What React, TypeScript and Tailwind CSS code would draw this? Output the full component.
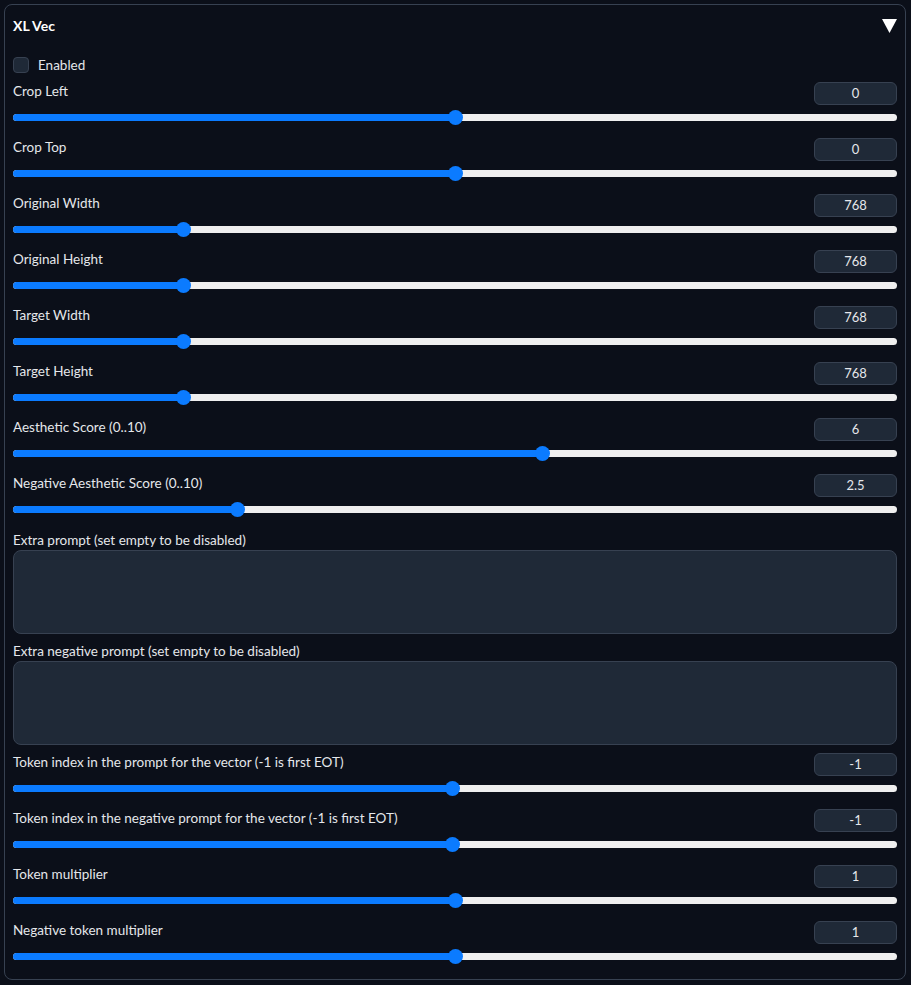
import React from 'react'

type SliderRow = { label: string; value: string; pos: number }

const topSliders: SliderRow[] = [
  { label: 'Crop Left', value: '0', pos: 0.5 },
  { label: 'Crop Top', value: '0', pos: 0.5 },
  { label: 'Original Width', value: '768', pos: 0.1875 },
  { label: 'Original Height', value: '768', pos: 0.1875 },
  { label: 'Target Width', value: '768', pos: 0.1875 },
  { label: 'Target Height', value: '768', pos: 0.1875 },
  { label: 'Aesthetic Score (0..10)', value: '6', pos: 0.6 },
  { label: 'Negative Aesthetic Score (0..10)', value: '2.5', pos: 0.25 },
]

const bottomSliders: SliderRow[] = [
  { label: 'Token index in the prompt for the vector (-1 is first EOT)', value: '-1', pos: 0.497 },
  { label: 'Token index in the negative prompt for the vector (-1 is first EOT)', value: '-1', pos: 0.497 },
  { label: 'Token multiplier', value: '1', pos: 0.5 },
  { label: 'Negative token multiplier', value: '1', pos: 0.5 },
]

function Slider({ label, value, pos }: SliderRow) {
  // thumb travels from 7px to width-7px, like a native range
  const center = `calc(7px + (100% - 14px) * ${pos})`
  return (
    <div className="pb-[13px]">
      <div className="flex items-start justify-between h-[23px]">
        <span className="text-[13.5px] leading-[18px] text-[#e5e7eb]">{label}</span>
        <div className="w-[83px] h-[23px] rounded-[6px] bg-[#1f2937] border border-[#374151] flex items-center justify-center text-[13px] text-[#e5e7eb]">
          {value}
        </div>
      </div>
      <div className="relative h-[16px] mt-[4px] flex items-center">
        <div className="w-full h-[7px] rounded-full bg-[#efefef] overflow-hidden flex">
          <div className="h-full bg-[#0b7bff]" style={{ width: center }} />
        </div>
        <div
          className="absolute top-[0.5px] w-[15px] h-[15px] -ml-[7.5px] rounded-full bg-[#0b7bff]"
          style={{ left: center }}
        />
      </div>
    </div>
  )
}

export default function App() {
  return (
    <div
      className="min-h-[985px] bg-[#0b0f19] pt-[4px] pl-[4px] pr-[5px] pb-[4px]"
      style={{ fontFamily: 'Lato, "Noto Sans", sans-serif' }}
    >
      <div className="border border-[#374151] rounded-[8px] pl-[8px] pr-[8px] pt-[8px] pb-[2px]">
        <div className="flex items-center justify-between h-[25px]">
          <span className="text-[14px] font-bold text-white">XL Vec</span>
          <svg width="15" height="14" viewBox="0 0 15 14">
            <polygon points="0,0 15,0 7.5,14" fill="#ffffff" />
          </svg>
        </div>
        <label className="flex items-center gap-[9px] mt-[19px] h-[16px]">
          <span className="w-[16px] h-[16px] rounded-[4px] bg-[#1f2937] border border-[#374151]" />
          <span className="text-[13.5px] leading-[16px] text-[#e5e7eb]">Enabled</span>
        </label>
        <div className="mt-[9px]">
          {topSliders.map((s) => (
            <Slider key={s.label} {...s} />
          ))}
        </div>
        <div className="flex flex-col">
          <span className="text-[13.5px] text-[#e5e7eb] h-[20px] leading-[20px]">
            Extra prompt (set empty to be disabled)
          </span>
          <textarea className="h-[84px] rounded-[8px] bg-[#1f2937] border border-[#374151] resize-none outline-none" />
          <span className="text-[13.5px] text-[#e5e7eb] mt-[7px] h-[20px] leading-[20px]">
            Extra negative prompt (set empty to be disabled)
          </span>
          <textarea className="h-[84px] rounded-[8px] bg-[#1f2937] border border-[#374151] resize-none outline-none" />
        </div>
        <div className="mt-[8px]">
          {bottomSliders.map((s) => (
            <Slider key={s.label} {...s} />
          ))}
        </div>
      </div>
    </div>
  )
}
